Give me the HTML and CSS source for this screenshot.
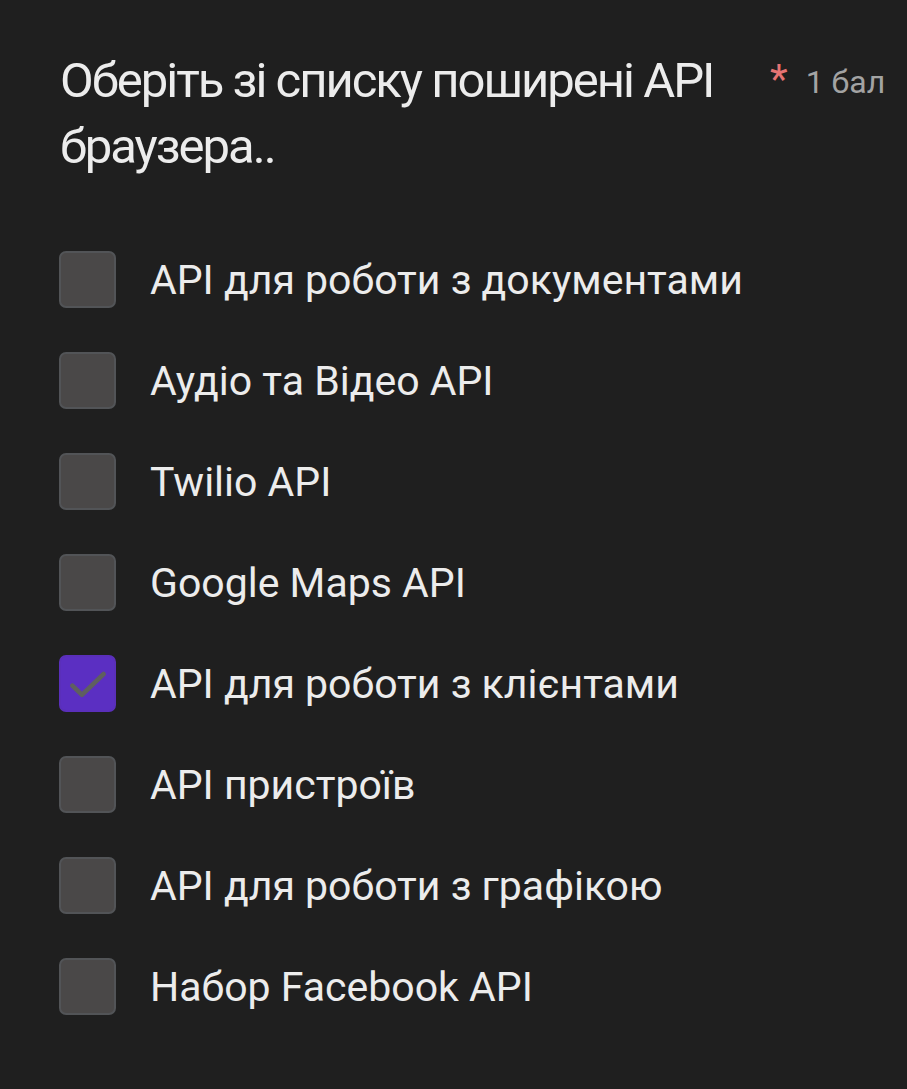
FILE: index.html
```html
<!DOCTYPE html>
<html lang="uk">
<head>
<meta charset="utf-8">
<link rel="stylesheet" href="styles.css">
</head>
<body>
<div class="card">
  <div class="header">
    <div class="title">Оберіть зі списку поширені API браузера..</div>
    <div class="meta"><span class="req">*</span><span class="points">1 бал</span></div>
  </div>
  <ul class="options">
    <li class="option"><span class="box"></span><span class="label">API для роботи з документами</span></li>
    <li class="option"><span class="box"></span><span class="label">Аудіо та Відео API</span></li>
    <li class="option"><span class="box"></span><span class="label">Twilio API</span></li>
    <li class="option"><span class="box"></span><span class="label">Google Maps API</span></li>
    <li class="option"><span class="box checked"><svg viewBox="0 0 24 24" width="50" height="50"><path d="M4.5 12.8l4.6 4.4L19.5 7.2" fill="none" stroke="#5f5f5f" stroke-width="2.2" stroke-linecap="round" stroke-linejoin="round"/></svg></span><span class="label">API для роботи з клієнтами</span></li>
    <li class="option"><span class="box"></span><span class="label">API пристроїв</span></li>
    <li class="option"><span class="box"></span><span class="label">API для роботи з графікою</span></li>
    <li class="option"><span class="box"></span><span class="label">Набор Facebook API</span></li>
  </ul>
</div>
</body>
</html>
```
FILE: styles.css
```css
html, body {
  margin: 0;
  padding: 0;
  background: #1f1f1f;
}
body {
  width: 907px;
  height: 1089px;
  overflow: hidden;
  font-family: Roboto, "Noto Sans", sans-serif;
  color: #e9e9e9;
}
.card {
  padding: 48px 0 0 60px;
}
.header {
  display: flex;
  align-items: flex-start;
}
.title {
  width: 690px;
  flex: none;
  font-size: 49px;
  line-height: 66px;
  letter-spacing: -2px;
  color: #ececec;
}
.meta {
  display: flex;
  align-items: baseline;
  gap: 18px;
  padding-top: 11px;
  margin-left: 20px;
  line-height: 1;
}
.req {
  color: #e57373;
  font-size: 41px;
}
.points {
  color: #a3a3a3;
  font-size: 32px;
}
.options {
  list-style: none;
  margin: 0;
  padding: 0;
  margin-top: 49px;
}
.option {
  display: flex;
  align-items: center;
  height: 101px;
}
.box {
  width: 53px;
  height: 53px;
  border: 2px solid #525457;
  background: #4a4848;
  border-radius: 7px;
  flex: none;
  display: flex;
  align-items: center;
  justify-content: center;
  margin-left: -1px;
}
.box.checked {
  background: #5b2fc2;
  border-color: #5a2fba;
}
.label {
  margin-left: 34px;
  font-size: 41px;
  color: #ececec;
}
```
